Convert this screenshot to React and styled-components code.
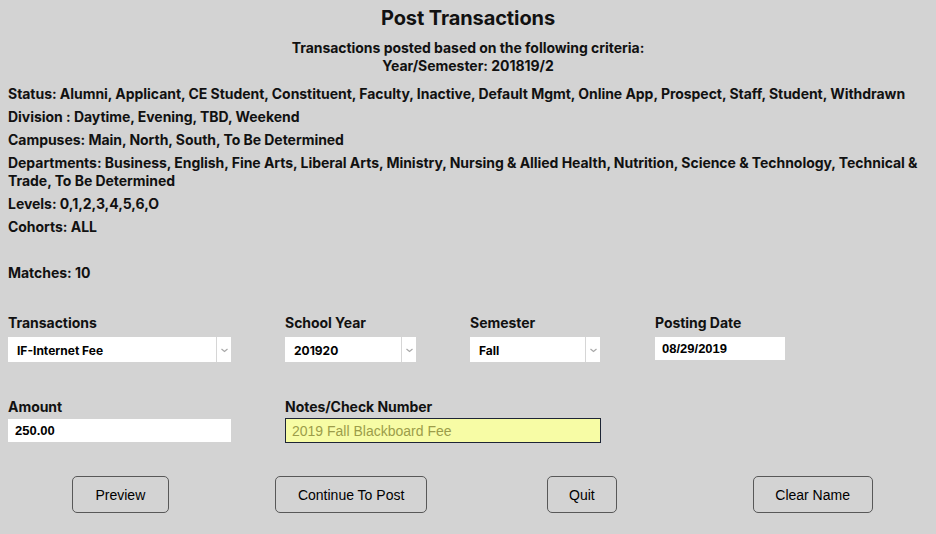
import React from "react";
import styled, { createGlobalStyle } from "styled-components";

const GlobalStyle = createGlobalStyle`
  html, body { margin: 0; padding: 0; background: #d3d3d3; }
  body { font-family: "Inter", "Liberation Sans", sans-serif; color: #111; }
`;

const Page = styled.div`
  padding: 0 8px 20px 8px;
  min-height: 534px;
  box-sizing: border-box;
  background: #d3d3d3;
`;

const Header = styled.header`
  text-align: center;
  padding-top: 6px;
`;

const Title = styled.h1`
  margin: 0;
  font-size: 20px;
  line-height: 24px;
  font-weight: 700;
  letter-spacing: -0.1px;
`;

const Subtitle = styled.div`
  margin-top: 9px;
  font-size: 14px;
  line-height: 18px;
  font-weight: 700;
  letter-spacing: -0.04px;
`;

const Criteria = styled.section`
  margin-top: 10px;
  display: flex;
  flex-direction: column;
  gap: 5px;
`;

const CriteriaLine = styled.p`
  margin: 0;
  font-size: 14px;
  line-height: 18px;
  font-weight: 700;
  letter-spacing: -0.04px;
  min-height: 18px;
`;

const FormGrid = styled.div`
  margin-top: ${(p) => p.$top}px;
  display: grid;
  grid-template-columns: 277px 185px 185px 1fr;
  align-items: start;
`;

const Field = styled.div`
  display: flex;
  flex-direction: column;
  gap: ${(p) => p.$gap}px;
  grid-column: span ${(p) => p.$span || 1};
`;

const Label = styled.label`
  font-size: 14px;
  line-height: 18px;
  font-weight: 700;
  letter-spacing: -0.04px;
`;

const SelectBox = styled.div`
  display: flex;
  width: ${(p) => p.$w}px;
  height: 25px;
  background: #fff;
  box-sizing: border-box;
`;

const SelectValue = styled.div`
  flex: 1;
  display: flex;
  align-items: center;
  padding: 2px 0 0 9px;
  font-size: 12px;
  font-weight: 700;
  color: #000;
`;

const ArrowCell = styled.div`
  width: 14px;
  border-left: 1px solid #d6d6d6;
  display: flex;
  align-items: center;
  justify-content: center;
  padding-top: 1px;
`;

const TextInput = styled.input`
  width: ${(p) => p.$w}px;
  height: ${(p) => (p.$highlight ? 25 : 23)}px;
  box-sizing: border-box;
  margin: ${(p) => (p.$highlight ? "-1px 0 0 0" : "0")};
  border: ${(p) => (p.$highlight ? "1px solid #1d2435" : "none")};
  background: ${(p) => (p.$highlight ? "#f7fca5" : "#fff")};
  color: ${(p) => (p.$highlight ? "#9c9c4a" : "#000")};
  font-family: "Liberation Sans", Arial, sans-serif;
  font-size: ${(p) => (p.$highlight ? 14 : 13)}px;
  font-weight: ${(p) => (p.$highlight ? 400 : 700)};
  padding: 0 0 0 ${(p) => (p.$highlight ? 6 : 7)}px;
  outline: none;
`;

const ButtonRow = styled.div`
  margin: 33px 0 0 -3px;
  display: grid;
  grid-template-columns: repeat(4, 1fr);
  justify-items: center;
`;

const Button = styled.button`
  width: ${(p) => p.$w}px;
  height: 37px;
  background: transparent;
  border: 1px solid #585858;
  border-radius: 5px;
  font-family: "Liberation Sans", Arial, sans-serif;
  font-size: 14px;
  color: #000;
  padding: 0;
  cursor: pointer;
`;

const Chevron = () => (
  <svg width="7" height="5" viewBox="0 0 7 5">
    <polyline points="0.5,1 3.5,3.5 6.5,1" fill="none" stroke="#a8a8a8" strokeWidth="1.2" />
  </svg>
);

const Select = ({ value, w }) => (
  <SelectBox $w={w}>
    <SelectValue>{value}</SelectValue>
    <ArrowCell>
      <Chevron />
    </ArrowCell>
  </SelectBox>
);

const criteria = [
  "Status: Alumni, Applicant, CE Student, Constituent, Faculty, Inactive, Default Mgmt, Online App, Prospect, Staff, Student, Withdrawn",
  "Division : Daytime, Evening, TBD, Weekend",
  "Campuses: Main, North, South, To Be Determined",
  "Departments: Business, English, Fine Arts, Liberal Arts, Ministry, Nursing & Allied Health, Nutrition, Science & Technology, Technical & Trade, To Be Determined",
  "Levels: 0,1,2,3,4,5,6,O",
  "Cohorts: ALL",
  "",
  "Matches: 10",
];

export default function App() {
  return (
    <>
      <GlobalStyle />
      <Page>
        <Header>
          <Title>Post Transactions</Title>
          <Subtitle>
            Transactions posted based on the following criteria:
            <br />
            Year/Semester: 201819/2
          </Subtitle>
        </Header>
        <Criteria>
          {criteria.map((c, i) => (
            <CriteriaLine key={i}>{c}</CriteriaLine>
          ))}
        </Criteria>
        <FormGrid $top={32}>
          <Field $gap={5}>
            <Label>Transactions</Label>
            <Select value="IF-Internet Fee" w={223} />
          </Field>
          <Field $gap={5}>
            <Label>School Year</Label>
            <Select value="201920" w={131} />
          </Field>
          <Field $gap={5}>
            <Label>Semester</Label>
            <Select value="Fall" w={130} />
          </Field>
          <Field $gap={5}>
            <Label>Posting Date</Label>
            <TextInput $w={130} defaultValue="08/29/2019" />
          </Field>
        </FormGrid>
        <FormGrid $top={36}>
          <Field $gap={3}>
            <Label>Amount</Label>
            <TextInput $w={223} defaultValue="250.00" />
          </Field>
          <Field $gap={3} $span={2}>
            <Label>Notes/Check Number</Label>
            <TextInput $w={316} $highlight defaultValue="2019 Fall Blackboard Fee" />
          </Field>
        </FormGrid>
        <ButtonRow>
          <Button $w={97}>Preview</Button>
          <Button $w={152}>Continue To Post</Button>
          <Button $w={70}>Quit</Button>
          <Button $w={120}>Clear Name</Button>
        </ButtonRow>
      </Page>
    </>
  );
}
